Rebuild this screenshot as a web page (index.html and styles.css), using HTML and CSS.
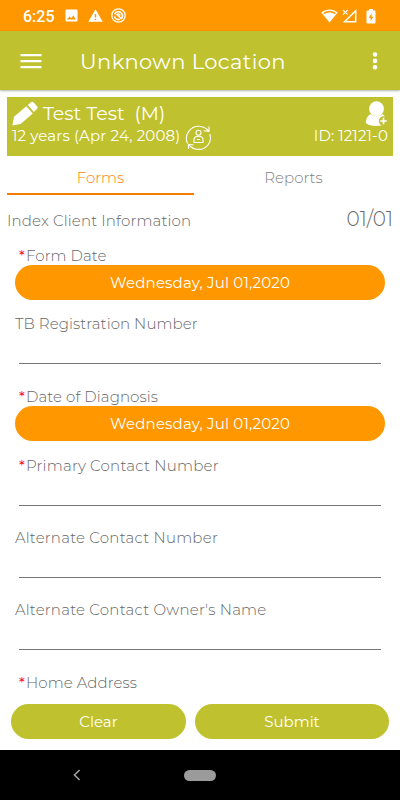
FILE: index.html
```html
<!DOCTYPE html>
<html lang="en">
<head>
<meta charset="utf-8">
<title>Unknown Location</title>
<link rel="stylesheet" href="styles.css">
</head>
<body>
<div class="screen">
  <div class="status">
    <span class="time">6:25</span>
    <svg class="s-img" width="13" height="13" viewBox="0 0 13 13"><path fill="#fff" fill-rule="evenodd" d="M1.5.5h10a1 1 0 0 1 1 1v10a1 1 0 0 1-1 1h-10a1 1 0 0 1-1-1v-10a1 1 0 0 1 1-1zM2 10.5h9L8.300 6.500 6.100 9.200 4.500 7.500z"/></svg>
    <svg class="s-warn" width="15" height="13" viewBox="0 0 15 13"><path fill="#fff" fill-rule="evenodd" d="M7.500.3 14.700 12.700H.3zM6.800 5v3.500h1.400V5zM6.800 9.700v1.400h1.400V9.700z"/></svg>
    <svg class="s-ring" width="15" height="15" viewBox="0 0 15 15" fill="none" stroke="#fff"><circle cx="7.500" cy="7.500" r="6.700" stroke-width="1.300"/><path stroke-width="1.500" d="M3.600 6.200C4.800 3.300 9 2.800 10.900 5.600c1 1.700.8 3.300-.2 4.600M3.500 8.500c.6 2.500 3 3.600 5.300 2.900M5.300 7.300c.8-1.700 3-1.700 3.900.2M6.300 6.800l4.500 4.400"/></svg>
    <span class="grow"></span>
    <svg class="s-wifi" width="17" height="14" viewBox="0 0 17 14"><path fill="#fff" fill-rule="evenodd" d="M.3 3.400C5-.6 12-.6 16.700 3.400L8.500 13.600zM2.300 3.900l1 1.200c3.200-2.300 7.200-2.300 10.400 0l1-1.200C11 1.100 6 1.100 2.300 3.900z"/></svg>
    <svg class="s-cell" width="15" height="14" viewBox="0 0 15 14" fill="none" stroke="#fff"><path stroke-width="1.500" d="M13.700 1.700V12.800H2.500z"/><path stroke-width="1.100" d="M1 1l4.700 4.700M5.700 1 1 5.700"/></svg>
    <svg class="s-batt" width="10" height="15" viewBox="0 0 10 15"><path fill="#fff" fill-rule="evenodd" d="M3 0h4v1.500h1.500a1 1 0 0 1 1 1V13.500a1 1 0 0 1-1 1h-7a1 1 0 0 1-1-1V2.500a1 1 0 0 1 1-1H3zM5.600 4.300 2.700 8.700h1.900v3.400l2.900-4.400H5.600z"/></svg>
  </div>

  <div class="appbar">
    <svg width="22" height="16" viewBox="0 0 22 16"><path fill="#fff" d="M.5 1h21v2.200H.5zM.5 7h21v2.200H.5zM.5 13h21v2.200H.5z"/></svg>
    <h1 class="title">Unknown Location</h1>
    <svg width="6" height="18" viewBox="0 0 6 18" fill="#fff"><circle cx="3" cy="2.500" r="2.300"/><circle cx="3" cy="8.900" r="2.300"/><circle cx="3" cy="15.300" r="2.300"/></svg>
  </div>

  <div class="patient">
    <div class="p-left">
      <div class="p-name">
        <svg width="26" height="25" viewBox="0 0 26 25" fill="#fff"><path d="M.3 24.500 2 15.800 14.300 5.300l6.500 7.300L8.600 23z"/><path d="M15.800 4 19 1.200q1.500-1 2.700.2l3.500 4q1 1.400-.3 2.500l-3 3.200z"/></svg>
        <span class="name">Test Test&nbsp; (M)</span>
      </div>
      <div class="p-age">
        <span class="age">12 years (Apr 24, 2008)</span>
        <svg width="27" height="26" viewBox="0 0 27 26" fill="none" stroke="#fff" stroke-width="1.100"><path d="M2.500 18.500C-1.500 9.500 6 1 14 1.300c4 .2 7.300 2 9.500 4.700M24 1.500v4.800l-5.200-.6M24.700 9C28 18 20 25 12.500 24.300c-3.500-.2-6.500-2-8.500-4.500M3.500 24v-4.700l5 .7"/><circle cx="13.500" cy="7.800" r="2.500"/><path d="M9 17.500v-3c0-2.500 2-3.300 4.500-3.300s4.500.8 4.500 3.300v3zM12 14.500h3"/></svg>
      </div>
    </div>
    <div class="p-right">
      <svg width="23" height="26" viewBox="0 0 23 26"><circle cx="11.500" cy="7.700" r="7.400" fill="#fff"/><path fill="#fff" d="M5.500 13q6 4.500 12 0c2.500 1.500 4 5 4 9-4 4-17 4-20.700 0 0-4 2-7.500 4.700-9z"/><circle cx="18.500" cy="20" r="4.700" fill="#bfc12f"/><path stroke="#fff" stroke-width="1.700" d="M18.500 16.700v6.600M15.200 20h6.600"/></svg>
      <span class="pid">ID: 12121-0</span>
    </div>
  </div>

  <div class="tabs">
    <div class="tab active">Forms</div>
    <div class="tab">Reports</div>
  </div>

  <div class="section">
    <span class="s-name">Index Client Information</span>
    <span class="page">01/01</span>
  </div>

  <div class="form">
    <div class="field">
      <div class="label req"><span class="star">*</span><span>Form Date</span></div>
      <div class="date">Wednesday, Jul 01,2020</div>
    </div>
    <div class="field gap-s">
      <div class="label">TB Registration Number</div>
      <div class="input"></div>
    </div>
    <div class="field gap-l">
      <div class="label req"><span class="star">*</span><span>Date of Diagnosis</span></div>
      <div class="date">Wednesday, Jul 01,2020</div>
    </div>
    <div class="field gap-m">
      <div class="label req"><span class="star">*</span><span class="wide">Primary Contact Number</span></div>
      <div class="input"></div>
    </div>
    <div class="field gap-n">
      <div class="label wide">Alternate Contact Number</div>
      <div class="input"></div>
    </div>
    <div class="field gap-n">
      <div class="label wide">Alternate Contact Owner's Name</div>
      <div class="input"></div>
    </div>
    <div class="field gap-l">
      <div class="label req"><span class="star">*</span><span>Home Address</span></div>
    </div>
  </div>

  <div class="actions">
    <div class="btn clear">Clear</div>
    <div class="btn submit">Submit</div>
  </div>

  <div class="nav">
    <svg width="8" height="12" viewBox="0 0 8 12" fill="none" stroke="#9b9b9b" stroke-width="1.700"><path d="M6.600 1 1.500 6l5.100 5"/></svg>
    <div class="home"></div>
  </div>
</div>
</body>
</html>
```

FILE: styles.css
```css
* { box-sizing: border-box; }
body { margin: 0; background: #fff; }
.screen {
  width: 400px; height: 800px; overflow: hidden;
  display: flex; flex-direction: column;
  font-family: Montserrat, Inter, sans-serif; font-weight: 300; font-size: 15px;
  color: #666; white-space: nowrap;
}
svg { display: block; flex: none; }
.grow { flex: 1; }

.status { flex: none; height: 31px; background: #ff9800; display: flex; align-items: center; padding: 0 24px 0 23px; color: #fff; }
.time { font-family: Roboto, sans-serif; font-weight: 500; font-size: 16px; width: 42px; padding-top: 2px; }
.s-warn { margin-left: 10px; }
.s-ring { margin-left: 8px; }
.s-cell { margin-left: 4px; }
.s-batt { margin-left: 9px; margin-top: 1px; }

.appbar { flex: none; height: 59px; background: #bfc12f; display: flex; align-items: center; padding: 1px 22px 0 20px; box-shadow: 0 1px 2px rgba(0,0,0,.3); color: #fff; }
.title { margin: 0 auto 0 38px; font-size: 21px; font-weight: 400; letter-spacing: .4px; }

.patient { flex: none; height: 59px; margin: 7px 7px 0; background: #bfc12f; color: #fff; display: flex; justify-content: space-between; padding: 4px 5px 0; font-weight: 400; }
.p-name { display: flex; height: 25px; align-items: center; }
.name { font-size: 19px; margin-left: 5px; letter-spacing: 0; }
.p-age { display: flex; height: 20px; align-items: center; }
.age { width: 173px; letter-spacing: .15px; margin-top: -2px; }
.p-age svg { margin-top: 4px; }
.p-right { display: flex; flex-direction: column; align-items: flex-end; }
.p-right svg { height: 26px; }
.pid { line-height: 18px; letter-spacing: .1px; }

.tabs { flex: none; display: flex; height: 39px; gap: 6px; padding: 0 13px 0 7px; }
.tab { flex: 1; text-align: center; line-height: 44px; border-bottom: 2px solid transparent; color: #808080; }
.tab.active { color: #ff8400; border-color: #f57c00; }

.section { flex: none; height: 50px; padding: 0 7px; display: flex; justify-content: space-between; line-height: 51px; }
.s-name { letter-spacing: .15px; }
.page { font-size: 20px; line-height: 48px; }

.form { padding: 0 15px; }
.label { height: 20px; line-height: 22px; letter-spacing: .08px; }
.wide, .label .wide { letter-spacing: .23px; }
.req { padding-left: 4px; display: flex; }
.star { color: #f00; width: 7px; font-weight: 400; }
.date { height: 35px; border-radius: 18px; background: #ff9800; color: #fff; text-align: center; line-height: 36px; font-weight: 400; letter-spacing: .18px; }
.input { height: 31px; margin: 0 4px; border-bottom: 1px solid #757575; }
.gap-s { margin-top: 13px; }
.gap-m { margin-top: 14px; }
.gap-n { margin-top: 21px; }
.gap-l { margin-top: 22px; }

.actions { flex: none; height: 46px; margin-top: auto; display: flex; gap: 9px; padding: 0 11px 11px; }
.btn { height: 35px; border-radius: 18px; background: #bfc12f; color: #fff; text-align: center; line-height: 35px; font-weight: 400; }
.clear { width: 175px; }
.submit { flex: 1; }

.nav { flex: none; height: 50px; background: #000; display: flex; align-items: center; padding-left: 73px; }
.home { width: 32px; height: 11px; border-radius: 6px; background: #9b9b9b; margin-left: 103px; }
```
